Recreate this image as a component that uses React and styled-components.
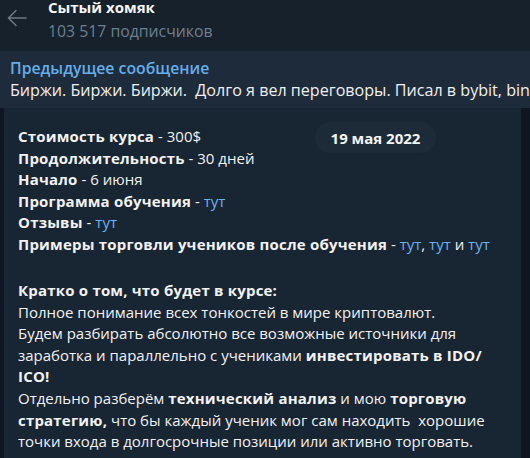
import React from "react";
import styled, { createGlobalStyle } from "styled-components";

const GlobalStyle = createGlobalStyle`
  html, body {
    margin: 0;
    padding: 0;
    background: #0e1621;
    font-family: "Open Sans", "Noto Sans", sans-serif;
    -webkit-font-smoothing: antialiased;
  }
`;

const Screen = styled.div`
  width: 530px;
  height: 458px;
  overflow: hidden;
  display: flex;
  flex-direction: column;
  background: #0e1621;
`;

const Header = styled.header`
  height: 51px;
  flex: none;
  display: flex;
  background: #17212b;
`;

const BackButton = styled.div`
  width: 48px;
  flex: none;
  display: flex;
  justify-content: center;
  padding-top: 9px;
  padding-right: 14px;
  box-sizing: border-box;
  color: #6c7883;
`;

const ChannelInfo = styled.div`
  display: flex;
  flex-direction: column;
`;

const ChannelName = styled.div`
  font-size: 15px;
  line-height: 15px;
  font-weight: 700;
  color: #f5f5f5;
`;

const Subscribers = styled.div`
  margin-top: 6px;
  font-size: 15.8px;
  line-height: 21px;
  color: #6d7f8f;
`;

const PinnedBar = styled.div`
  height: 57px;
  flex: none;
  padding: 6px 10px 0;
  box-sizing: border-box;
  background: #1e2b3a;
  overflow: hidden;
  white-space: pre;
`;

const PinnedTitle = styled.div`
  font-size: 15.8px;
  line-height: 22px;
  font-weight: 600;
  color: #64aeea;
`;

const PinnedText = styled.div`
  font-size: 16.1px;
  line-height: 22px;
  color: #f0f0f0;
`;

const Chat = styled.div`
  position: relative;
  flex: 1;
  display: flex;
  padding: 0 9px 0 4px;
  min-height: 0;
`;

const Bubble = styled.div`
  flex: 1;
  background: #182533;
  padding: 18px 14px 0;
  font-size: 15px;
  line-height: 21.6px;
  color: #f2f2f2;
  white-space: pre-wrap;
`;

const Line = styled.div`
  min-height: 21.6px;
`;

const Gap = styled.div`
  height: 24.5px;
`;

const B = styled.b`
  font-weight: 700;
  letter-spacing: 0.2px;
`;

const Link = styled.span`
  color: #6ab2f2;
`;

const DateBadge = styled.div`
  position: absolute;
  top: 14px;
  left: 315px;
  width: 121px;
  height: 31px;
  border-radius: 16px;
  background: #1d2a38;
  display: flex;
  align-items: center;
  justify-content: center;
  font-size: 15px;
  font-weight: 700;
  color: #f5f5f5;
`;

const BackArrow = () => (
  <svg width="20" height="18" viewBox="0 0 20 18" fill="none">
    <path
      d="M19 9H2M9 1.5L1.5 9L9 16.5"
      stroke="currentColor"
      strokeWidth="1.6"
      strokeLinecap="round"
      strokeLinejoin="round"
    />
  </svg>
);

export default function App() {
  return (
    <Screen>
      <GlobalStyle />
      <Header>
        <BackButton>
          <BackArrow />
        </BackButton>
        <ChannelInfo>
          <ChannelName>Сытый хомяк</ChannelName>
          <Subscribers>103 517 подписчиков</Subscribers>
        </ChannelInfo>
      </Header>
      <PinnedBar>
        <PinnedTitle>Предыдущее сообщение</PinnedTitle>
        <PinnedText>
          Биржи. Биржи. Биржи.  Долго я вел переговоры. Писал в bybit, bingx и другие биржи.
        </PinnedText>
      </PinnedBar>
      <Chat>
        <Bubble>
          <Line><B>Стоимость курса</B> - 300$</Line>
          <Line><B>Продолжительность</B> - 30 дней</Line>
          <Line><B>Начало</B> - 6 июня</Line>
          <Line><B>Программа обучения</B> - <Link>тут</Link></Line>
          <Line><B>Отзывы</B> - <Link>тут</Link></Line>
          <Line>
            <B>Примеры торговли учеников после обучения</B> - <Link>тут</Link>, <Link>тут</Link> и <Link>тут</Link>
          </Line>
          <Gap />
          <Line><B>Кратко о том, что будет в курсе:</B></Line>
          <Line>Полное понимание всех тонкостей в мире криптовалют.</Line>
          <Line>Будем разбирать абсолютно все возможные источники для</Line>
          <Line>заработка и параллельно с учениками <B>инвестировать в IDO/</B></Line>
          <Line><B>ICO!</B></Line>
          <Line>Отдельно разберём <B>технический анализ</B> и мою <B>торговую</B></Line>
          <Line><B>стратегию,</B> что бы каждый ученик мог сам находить  хорошие</Line>
          <Line>точки входа в долгосрочные позиции или активно торговать.</Line>
        </Bubble>
        <DateBadge>19 мая 2022</DateBadge>
      </Chat>
    </Screen>
  );
}
